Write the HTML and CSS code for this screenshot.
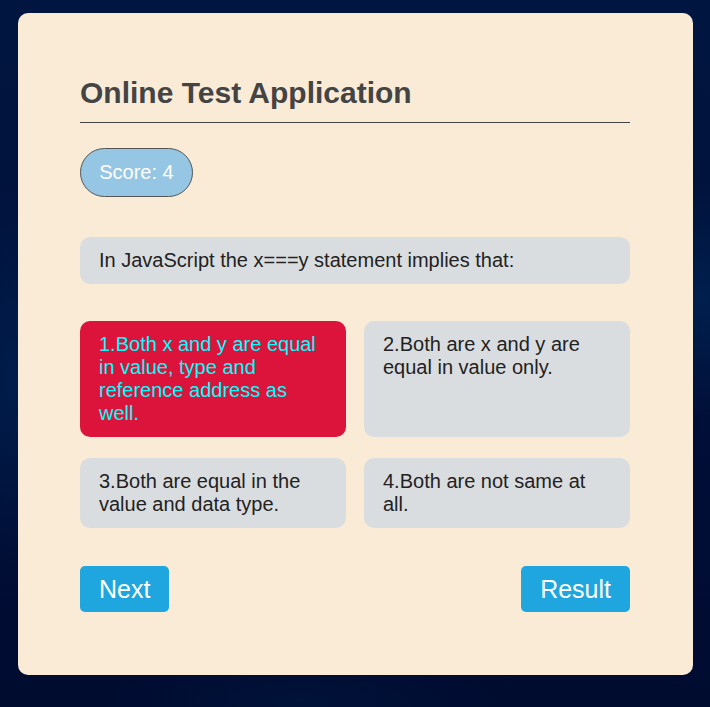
FILE: index.html
```html
<!DOCTYPE html>
<html lang="en">
<head>
<meta charset="utf-8">
<title>Online Test Application</title>
<link rel="stylesheet" href="styles.css">
</head>
<body>
<main class="card">
  <h1 class="title">Online Test Application</h1>
  <div class="score">Score: 4</div>
  <div class="question">In JavaScript the x===y statement implies that:</div>
  <div class="options">
    <div class="option selected">1.Both x and y are equal in value, type and reference address as well.</div>
    <div class="option">2.Both are x and y are equal in value only.</div>
    <div class="option">3.Both are equal in the value and data type.</div>
    <div class="option">4.Both are not same at all.</div>
  </div>
  <div class="actions">
    <button class="btn">Next</button>
    <button class="btn">Result</button>
  </div>
</main>
</body>
</html>
```

FILE: styles.css
```css
* { box-sizing: border-box; }
html, body { height: 100%; }
body {
  margin: 0;
  padding: 13px 17px 0 18px;
  font-family: "Liberation Sans", Arial, sans-serif;
  background-color: #00123a;
  background-image:
    radial-gradient(ellipse 120px 200px at 20px 380px, rgba(0, 40, 90, 0.55), transparent),
    radial-gradient(ellipse 160px 120px at 700px 300px, rgba(0, 45, 95, 0.5), transparent),
    radial-gradient(ellipse 200px 40px at 300px 700px, rgba(0, 30, 70, 0.4), transparent),
    linear-gradient(180deg, #001640 0%, #00103a 50%, #000b30 100%);
}
.card {
  width: 675px;
  height: 662px;
  background: #faebd7;
  border-radius: 10px;
  padding: 62px 63px 63px 62px;
  display: flex;
  flex-direction: column;
}
.title {
  margin: 0;
  font-size: 30px;
  font-weight: bold;
  color: #444;
  padding-bottom: 12px;
  border-bottom: 1px solid #444;
  line-height: 35px;
}
.score {
  align-self: flex-start;
  margin-top: 25px;
  width: 113px;
  height: 49px;
  border: 1px solid #555;
  border-radius: 25px;
  background: #95c6e4;
  color: #fff;
  font-size: 20px;
  display: flex;
  align-items: center;
  justify-content: center;
}
.question {
  margin-top: 40px;
  background: #dadddf;
  border-radius: 10px;
  padding: 12px 19px;
  font-size: 20px;
  line-height: 23px;
  color: #222;
}
.options {
  margin-top: 37px;
  display: grid;
  grid-template-columns: 1fr 1fr;
  column-gap: 18px;
  row-gap: 21px;
}
.option {
  background: #dadddf;
  border-radius: 10px;
  padding: 12px 19px;
  font-size: 20px;
  line-height: 23px;
  color: #222;
}
.option.selected {
  background: #dc143c;
  color: #00ffff;
}
.actions {
  margin-top: 38px;
  display: flex;
  justify-content: space-between;
}
.btn {
  height: 46px;
  padding: 0 19px;
  border: none;
  border-radius: 5px;
  background: #1fa6de;
  color: #fff;
  font-family: inherit;
  font-size: 25px;
}
```
